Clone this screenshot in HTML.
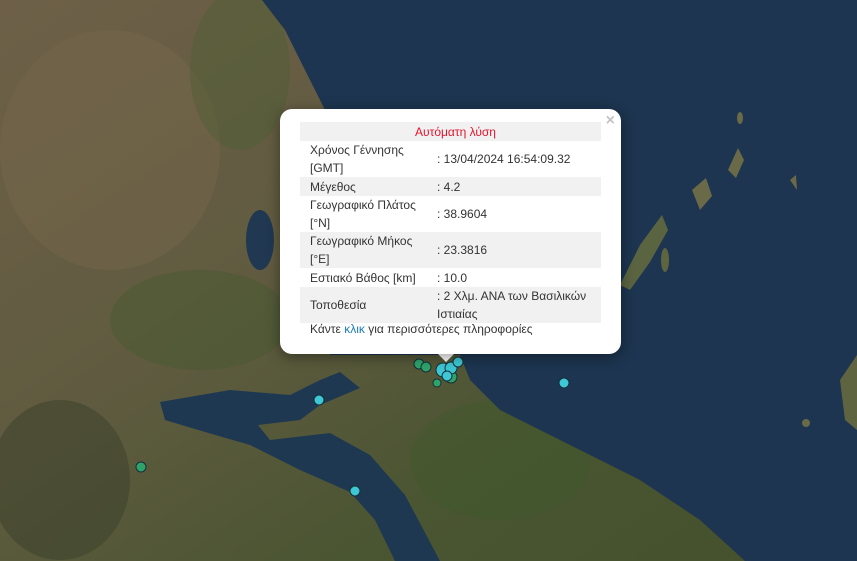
<!DOCTYPE html>
<html><head><meta charset="utf-8"><style>
html,body{margin:0;padding:0;width:857px;height:561px;overflow:hidden;font-family:"Liberation Sans",Arial,sans-serif}
#map{position:absolute;left:0;top:0}
.pop{position:absolute;left:280px;top:109px;width:341px;height:245px;background:#fff;border-radius:12px;box-shadow:0 3px 14px rgba(0,0,0,.4)}
.tip{position:absolute;left:436px;top:352px;width:0;height:0;border-left:10px solid transparent;border-right:10px solid transparent;border-top:10px solid #fff}
.x{position:absolute;right:6px;top:3px;color:#c3c3c3;font-size:16px;font-weight:bold}
table{position:absolute;left:20px;top:13px;width:301px;border-collapse:collapse;font-size:12px;color:#333;line-height:18px}
td{padding:0 0 0 10px;vertical-align:middle}
tr.g td{background:#f1f1f1}
td.v{padding-left:0}
.h td{color:#e3142e;text-align:center;height:19px}
.f{position:absolute;left:30px;top:213px;font-size:12px;color:#333}
.f span{color:#1a7fb8}
</style></head><body>
<svg id="map" width="857" height="561" viewBox="0 0 857 561">
<defs>
<linearGradient id="land" x1="0" y1="0" x2="1" y2="1">
<stop offset="0" stop-color="#6e6048"/><stop offset="0.4" stop-color="#605b40"/><stop offset="0.7" stop-color="#4a5532"/><stop offset="1" stop-color="#44502c"/>
</linearGradient>
</defs>
<rect width="857" height="561" fill="url(#land)"/>
<ellipse cx="110" cy="150" rx="110" ry="120" fill="#7a6a4e" opacity=".35"/>
<ellipse cx="200" cy="320" rx="90" ry="50" fill="#3e5a2b" opacity=".35"/>
<ellipse cx="240" cy="70" rx="50" ry="80" fill="#4a5e32" opacity=".4"/>
<ellipse cx="60" cy="480" rx="70" ry="80" fill="#3a3f2a" opacity=".5"/>
<ellipse cx="500" cy="460" rx="90" ry="60" fill="#3f5a2a" opacity=".4"/>
<path d="M262 0 L857 0 L857 561 L745 561 L700 520 L640 480 L560 440 L500 410 L470 380 L460 355 L330 355 L325 110 L300 60 L285 30 Z" fill="#1d3550"/>
<path d="M160 402 L230 390 L290 395 L320 380 L340 372 L360 388 L320 405 L300 420 L258 425 L270 440 L330 433 L370 455 L405 495 L440 561 L395 561 L375 520 L350 492 L300 470 L250 445 L205 432 L165 420 Z" fill="#1f3852"/>
<ellipse cx="260" cy="240" rx="14" ry="30" fill="#203852"/>
<path d="M620 285 L640 245 L662 215 L668 230 L650 262 L630 290 Z" fill="#5b6440"/>
<path d="M692 190 L706 178 L712 196 L700 210 Z" fill="#6a6a48"/>
<path d="M728 170 L738 148 L744 160 L736 178 Z" fill="#6a6a48"/>
<path d="M790 180 L796 175 L797 190 Z" fill="#6a6a48"/>
<path d="M840 380 L857 355 L857 430 L845 420 Z" fill="#5e6440"/>
<ellipse cx="740" cy="118" rx="3" ry="6" fill="#6a6a48"/>
<ellipse cx="806" cy="423" rx="4" ry="4" fill="#6a6a48"/>
<ellipse cx="665" cy="260" rx="4" ry="12" fill="#5e6440"/>
<g stroke="#14303a" stroke-width="1">
<circle cx="419" cy="364" r="5" fill="#2fa36a"/><circle cx="426" cy="367" r="5" fill="#2fa36a"/>
<circle cx="437" cy="383" r="4" fill="#2fa36a"/><circle cx="451" cy="377" r="6" fill="#2fa36a"/>
<circle cx="443" cy="370" r="7" fill="#3ec7d4"/><circle cx="451" cy="368" r="6" fill="#3ec7d4"/>
<circle cx="458" cy="362" r="5" fill="#3ec7d4"/><circle cx="447" cy="376" r="5" fill="#3ec7d4"/>
<circle cx="564" cy="383" r="5" fill="#3ec7d4"/><circle cx="319" cy="400" r="5" fill="#3ec7d4"/>
<circle cx="355" cy="491" r="5" fill="#3ec7d4"/><circle cx="141" cy="467" r="5" fill="#2fa36a"/>
</g>
</svg>
<div class="tip"></div>
<div class="pop">
<div class="x">×</div>
<table>
<tr class="g h"><td colspan="2">Αυτόματη λύση</td></tr>
<tr style="height:36px"><td style="width:127px">Χρόνος Γέννησης<br>[GMT]</td><td class="v">: 13/04/2024 16:54:09.32</td></tr>
<tr class="g" style="height:19px"><td>Μέγεθος</td><td class="v">: 4.2</td></tr>
<tr style="height:36px"><td>Γεωγραφικό Πλάτος<br>[°N]</td><td class="v">: 38.9604</td></tr>
<tr class="g" style="height:36px"><td>Γεωγραφικό Μήκος<br>[°E]</td><td class="v">: 23.3816</td></tr>
<tr style="height:19px"><td>Εστιακό Βάθος [km]</td><td class="v">: 10.0</td></tr>
<tr class="g" style="height:35px"><td>Τοποθεσία</td><td class="v">: 2 Χλμ. ΑΝΑ των Βασιλικών<br>Ιστιαίας</td></tr>
</table>
<div class="f">Κάντε <span>κλικ</span> για περισσότερες πληροφορίες</div>
</div>
</body></html>
